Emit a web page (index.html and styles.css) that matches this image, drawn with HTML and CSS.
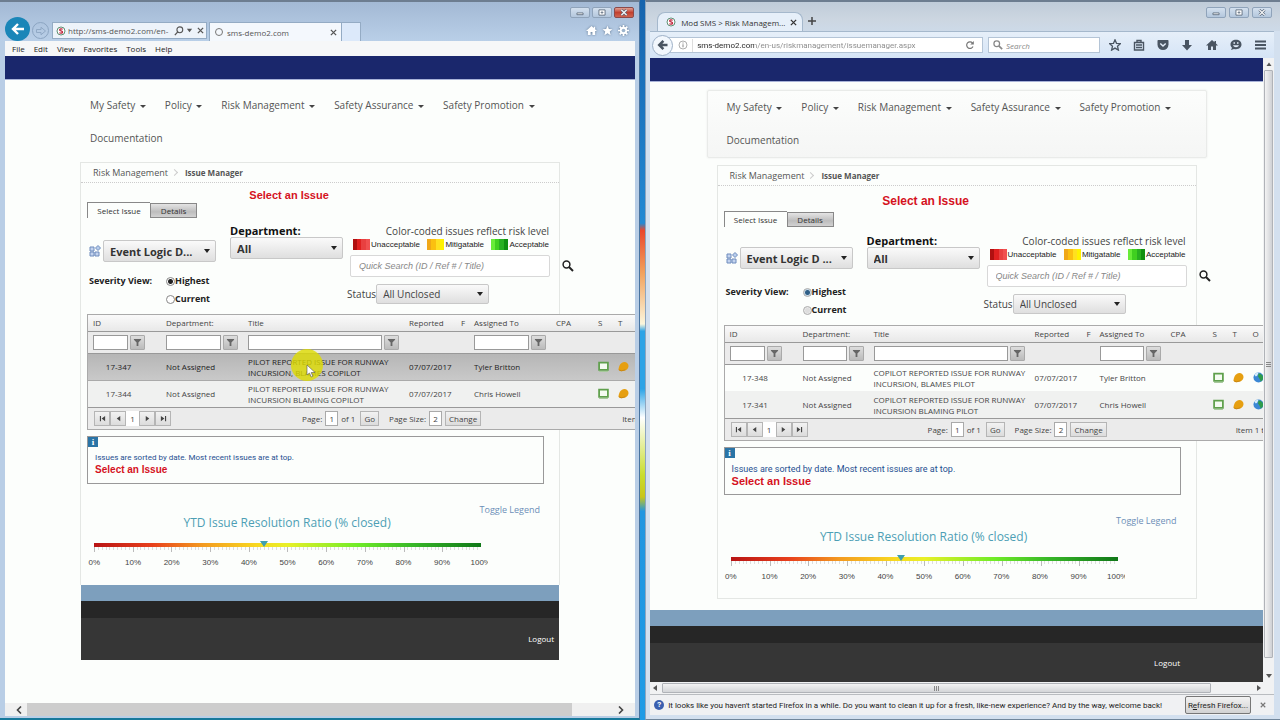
FILE: index.html
```html
<!DOCTYPE html>
<html lang="en">
<head>
    <meta charset="UTF-8">
    <meta name="viewport" content="width=device-width, initial-scale=1.0">
    <title>Risk Management - Issue Manager</title>
    <link rel="stylesheet" href="styles.css">
</head>
<body>
    <!-- Shared icons -->
    <svg class="sprite" aria-hidden="true">
        <symbol id="i-favicon" viewBox="0 0 10 10"><circle cx="5" cy="5" r="4" fill="#fff" stroke="#5f8f74" stroke-width="1"/><path d="M6.6 3.4C5.8 2.6 3.6 2.7 3.7 4c.1 1.200 2.800.8 2.800 2.100C6.400 7.400 4.200 7.400 3.400 6.600" fill="none" stroke="#c0203a" stroke-width="1.300"/></symbol>
        <symbol id="i-back" viewBox="0 0 16 16"><path d="M14 8H3M8 3L3 8l5 5" fill="none" stroke="currentColor" stroke-width="2.400"/></symbol>
        <symbol id="i-back-solid" viewBox="0 0 16 16"><path d="M14 8H4M8.500 2.500L3 8l5.500 5.500" fill="none" stroke="currentColor" stroke-width="3.400"/></symbol>
        <symbol id="i-forward" viewBox="0 0 16 16"><path d="M2 6h6V3l6 5-6 5v-3H2z" fill="none" stroke="currentColor" stroke-width="1.200"/></symbol>
        <symbol id="i-search" viewBox="0 0 12 12"><circle cx="4.500" cy="4.500" r="3.400" fill="none" stroke="currentColor" stroke-width="1.500"/><path d="M7 7l4 4" stroke="currentColor" stroke-width="2"/></symbol>
        <symbol id="i-find" viewBox="0 0 12 12"><circle cx="7" cy="4.500" r="3.500" fill="none" stroke="currentColor" stroke-width="1.300"/><path d="M4.500 7L1 11" stroke="currentColor" stroke-width="1.500"/></symbol>
        <symbol id="i-close" viewBox="0 0 8 8"><path d="M1 1l6 6M7 1L1 7" stroke="currentColor" stroke-width="1.500"/></symbol>
        <symbol id="i-caret" viewBox="0 0 8 8"><path d="M1 2h6L4 6z" fill="currentColor"/></symbol>
        <symbol id="i-home" viewBox="0 0 12 12"><path d="M6 1L0 6.500h2V11h3V7.500h2V11h3V6.500h2L10 4.600V2H8.500v1.300z" fill="currentColor"/></symbol>
        <symbol id="i-star" viewBox="0 0 12 12"><path d="M6 .8l1.500 3.500 3.900.4-2.900 2.500.9 3.900L6 9.100l-3.400 2 .9-3.900L.6 4.700l3.900-.4z"/></symbol>
        <symbol id="i-gear" viewBox="0 0 12 12"><path d="M6 0v12M0 6h12M1.800 1.800l8.400 8.400M10.200 1.800l-8.400 8.400" stroke="currentColor" stroke-width="1.800"/><circle cx="6" cy="6" r="4" fill="currentColor"/><circle cx="6" cy="6" r="2" fill="#9db4cc"/></symbol>
        <symbol id="i-min" viewBox="0 0 10 8"><path d="M1.500 4.500h7v2h-7z" fill="#fff" stroke="#5c6a7c"/></symbol>
        <symbol id="i-max" viewBox="0 0 10 8"><path d="M1.500 1h7v6h-7z" fill="#fff" stroke="#5c6a7c"/><path d="M4 3.500h2v1H4z" fill="#fff" stroke="#5c6a7c"/></symbol>
        <symbol id="i-x" viewBox="0 0 10 8"><path d="M2 1l6 6M8 1L2 7" stroke="#5c6a7c" stroke-width="3"/><path d="M2 1l6 6M8 1L2 7" stroke="#fff" stroke-width="1.500"/></symbol>
        <symbol id="i-funnel" viewBox="0 0 10 10"><path d="M1 1h8v1L6 5v4H4V5L1 2z" fill="#666"/></symbol>
        <symbol id="i-left" viewBox="0 0 8 8"><path d="M6 1v6L2 4z" fill="currentColor"/></symbol>
        <symbol id="i-right" viewBox="0 0 8 8"><path d="M2 1v6l4-3z" fill="currentColor"/></symbol>
        <symbol id="i-chev-left" viewBox="0 0 8 8"><path d="M6 .5L2.500 4 6 7.500" fill="none" stroke="currentColor" stroke-width="1.600"/></symbol>
        <symbol id="i-chev-right" viewBox="0 0 8 8"><path d="M2 .5L5.500 4 2 7.500" fill="none" stroke="currentColor" stroke-width="1.600"/></symbol>
        <symbol id="i-first" viewBox="0 0 8 8"><path d="M1 1h1.300v6H1zM7 1v6L3 4z" fill="currentColor"/></symbol>
        <symbol id="i-last" viewBox="0 0 8 8"><path d="M7 1H5.700v6H7zM1 1v6l4-3z" fill="currentColor"/></symbol>
        <symbol id="i-up" viewBox="0 0 8 8"><path d="M1.500 6h5L4 2.500z" fill="currentColor"/></symbol>
        <symbol id="i-logic" viewBox="0 0 12 12"><path d="M1 2h4v4H1zM1 7h4v4H1zM6 7h4v4H6z" fill="#c3d3ee" stroke="#6f8cbd"/><path d="M9 .500L11.500 3 9 5.500 6.500 3z" fill="#b7cdec" stroke="#6f8cbd"/></symbol>
        <symbol id="i-screen" viewBox="0 0 10 10"><path d="M1 1.500h8v6.500H1z" fill="#f4fbf1" stroke="#5fa04c" stroke-width="1.600"/><path d="M1 9.500h8" stroke="#a7c99c"/></symbol>
        <symbol id="i-helmet" viewBox="0 0 12 12"><path d="M.5 9.500C1 5 3 1.500 7 1.200c2.500 0 4.500 2 4.500 4.300 0 2-1.500 3.500-3 4.700L3 11.300z" fill="#e69f11"/><path d="M1 9.800l3 .9 4-1" fill="none" stroke="#c5830f"/></symbol>
        <symbol id="i-globe" viewBox="0 0 12 12"><circle cx="6" cy="6" r="5.500" fill="#3b87d4"/><path d="M1.500 3C3 1 5 .5 6 1L4.500 4 3 5z" fill="#d8eefc"/><path d="M6 1.500c3 0 5 2 5 4.500 0 2-1 3.500-2.500 4.500L7 7 5.500 5z" fill="#2f9c4c"/></symbol>
    </svg>

    <div class="desktop">
        <!-- Internet Explorer window -->
        <section class="window ie">
            <header class="ie-chrome">
                <div class="window-buttons">
                    <button type="button" aria-label="Minimize"><svg><use href="#i-min"/></svg></button>
                    <button type="button" aria-label="Maximize"><svg><use href="#i-max"/></svg></button>
                    <button type="button" class="close" aria-label="Close"><svg><use href="#i-x"/></svg></button>
                </div>
                <div class="ie-bar">
                    <button type="button" class="ie-back" aria-label="Back"><svg><use href="#i-back"/></svg></button>
                    <button type="button" class="ie-forward" aria-label="Forward"><svg><use href="#i-forward"/></svg></button>
                    <div class="ie-address">
                        <svg><use href="#i-favicon"/></svg>
                        <input type="text" value="http://sms-demo2.com/en-" aria-label="Address">
                        <svg><use href="#i-find"/></svg>
                        <svg class="tiny"><use href="#i-caret"/></svg>
                        <svg class="stop"><use href="#i-close"/></svg>
                    </div>
                    <div class="ie-tab">
                        <span class="spinner"></span>
                        <span class="ie-tab-title">sms-demo2.com</span>
                        <svg class="tiny"><use href="#i-close"/></svg>
                    </div>
                    <button type="button" class="ie-new-tab" aria-label="New tab"></button>
                    <div class="ie-tools">
                        <svg><use href="#i-home"/></svg>
                        <svg fill="currentColor"><use href="#i-star"/></svg>
                        <svg><use href="#i-gear"/></svg>
                    </div>
                </div>
            </header>
            <nav class="ie-menu">
                <button type="button">File</button>
                <button type="button">Edit</button>
                <button type="button">View</button>
                <button type="button">Favorites</button>
                <button type="button">Tools</button>
                <button type="button">Help</button>
            </nav>
            <main class="page">
                <div class="topbar"></div>
                <ul class="nav">
                    <li><a href="#">My Safety <i class="caret"></i></a></li>
                    <li><a href="#">Policy <i class="caret"></i></a></li>
                    <li><a href="#">Risk Management <i class="caret"></i></a></li>
                    <li><a href="#">Safety Assurance <i class="caret"></i></a></li>
                    <li><a href="#">Safety Promotion <i class="caret"></i></a></li>
                    <li><a href="#">Documentation</a></li>
                </ul>
                <div class="content">
                    <div class="breadcrumb"><a href="#">Risk Management</a><i class="chevron"></i><strong>Issue Manager</strong></div>
                    <h1 class="alert">Select an Issue</h1>
                    <div class="tabs">
                        <button type="button" class="tab active">Select Issue</button>
                        <button type="button" class="tab">Details</button>
                    </div>
                    <div class="filters">
                        <div class="filters-main">
                            <div class="filters-row">
                                <svg class="logic"><use href="#i-logic"/></svg>
                                <span class="select"><select aria-label="Event logic"><option>Event Logic D...</option></select></span>
                                <div class="department">
                                    <label for="ie-dept">Department:</label>
                                    <span class="select"><select id="ie-dept"><option>All</option></select></span>
                                </div>
                            </div>
                            <fieldset class="severity">
                                <legend>Severity View:</legend>
                                <div>
                                    <label><input type="radio" name="ie-severity" checked>Highest</label>
                                    <label><input type="radio" name="ie-severity">Current</label>
                                </div>
                            </fieldset>
                        </div>
                        <div class="filters-side">
                            <p class="legend-title">Color-coded issues reflect risk level</p>
                            <div class="legend-items">
                                <span><i class="swatch red"></i>Unacceptable</span>
                                <span><i class="swatch yellow"></i>Mitigatable</span>
                                <span><i class="swatch green"></i>Acceptable</span>
                            </div>
                            <div class="quick-search">
                                <input type="text" placeholder="Quick Search (ID / Ref # / Title)" aria-label="Quick search">
                                <button type="button" aria-label="Search"><svg><use href="#i-search"/></svg></button>
                            </div>
                            <div class="status">
                                <label for="ie-status">Status</label>
                                <span class="select light"><select id="ie-status"><option>All Unclosed</option></select></span>
                            </div>
                        </div>
                    </div>
                    <div class="grid">
                        <table>
                            <colgroup><col class="c-id"><col class="c-dept"><col class="c-title"><col class="c-date"><col class="c-flag"><col class="c-user"><col class="c-cpa"><col class="c-icon"><col class="c-icon"><col class="c-icon"><col></colgroup>
                            <thead>
                                <tr><th>ID</th><th>Department:</th><th>Title</th><th>Reported</th><th>F</th><th>Assigned To</th><th>CPA</th><th>S</th><th>T</th><th>O</th><th></th></tr>
                                <tr class="filter-row">
                                    <td><div class="filter f-id"><input type="text" aria-label="Filter ID"><button type="button" aria-label="Filter"><svg><use href="#i-funnel"/></svg></button></div></td>
                                    <td><div class="filter"><input type="text" aria-label="Filter department"><button type="button" aria-label="Filter"><svg><use href="#i-funnel"/></svg></button></div></td>
                                    <td><div class="filter"><input type="text" aria-label="Filter title"><button type="button" aria-label="Filter"><svg><use href="#i-funnel"/></svg></button></div></td>
                                    <td></td><td></td>
                                    <td><div class="filter"><input type="text" aria-label="Filter assigned to"><button type="button" aria-label="Filter"><svg><use href="#i-funnel"/></svg></button></div></td>
                                    <td></td><td></td><td></td><td></td><td></td>
                                </tr>
                            </thead>
                            <tbody>
                                <tr class="hover">
                                    <td class="id">17-347</td><td>Not Assigned</td>
                                    <td>PILOT REPORTED ISSUE FOR RUNWAY INCURSION, BLAMES COPILOT
                                        <span class="pointer"><svg viewBox="0 0 10 14"><path d="M1 1v10l2.500-2 1.700 4 1.600-.7L5.200 8.500H9z" fill="#fff" stroke="#555" stroke-width=".6"/></svg></span>
                                    </td>
                                    <td>07/07/2017</td><td></td><td>Tyler Britton</td><td></td>
                                    <td class="icon"><svg><use href="#i-screen"/></svg></td><td class="icon"><svg><use href="#i-helmet"/></svg></td><td class="icon"><svg><use href="#i-globe"/></svg></td><td></td>
                                </tr>
                                <tr class="alt">
                                    <td class="id">17-344</td><td>Not Assigned</td>
                                    <td>PILOT REPORTED ISSUE FOR RUNWAY INCURSION BLAMING COPILOT</td>
                                    <td>07/07/2017</td><td></td><td>Chris Howell</td><td></td>
                                    <td class="icon"><svg><use href="#i-screen"/></svg></td><td class="icon"><svg><use href="#i-helmet"/></svg></td><td class="icon"><svg><use href="#i-globe"/></svg></td><td></td>
                                </tr>
                            </tbody>
                        </table>
                        <div class="pager">
                            <div class="pager-buttons">
                                <button type="button" aria-label="First"><svg><use href="#i-first"/></svg></button>
                                <button type="button" aria-label="Previous"><svg><use href="#i-left"/></svg></button>
                                <span class="current">1</span>
                                <button type="button" aria-label="Next"><svg><use href="#i-right"/></svg></button>
                                <button type="button" aria-label="Last"><svg><use href="#i-last"/></svg></button>
                            </div>
                            <div class="pager-group">
                                <label for="ie-page">Page:</label><input id="ie-page" type="text" value="1"><span>of 1</span><button type="button">Go</button>
                            </div>
                            <div class="pager-group">
                                <label for="ie-size">Page Size:</label><input id="ie-size" type="text" value="2"><button type="button">Change</button>
                            </div>
                            <span class="pager-info">Item 1 to 2 of 2</span>
                        </div>
                    </div>
                    <div class="info">
                        <span class="info-icon">i</span>
                        <p>Issues are sorted by date. Most recent issues are at top.</p>
                        <p class="alert">Select an Issue</p>
                    </div>
                    <div class="ratio">
                        <a href="#" class="toggle">Toggle Legend</a>
                        <h2>YTD Issue Resolution Ratio (% closed)</h2>
                        <div class="gauge">
                            <div class="gauge-bar"><i class="gauge-mark" style="left: 44%"></i></div>
                            <div class="gauge-ticks"></div>
                            <div class="gauge-scale"><span>0%</span><span>10%</span><span>20%</span><span>30%</span><span>40%</span><span>50%</span><span>60%</span><span>70%</span><span>80%</span><span>90%</span><span>100%</span></div>
                        </div>
                    </div>
                </div>
                <footer class="footer">
                    <div class="footer-blue"></div>
                    <div class="footer-dark"></div>
                    <div class="footer-main"><a href="#">Logout</a></div>
                </footer>
            </main>
            <div class="ie-scroll">
                <svg><use href="#i-chev-left"/></svg>
                <div class="track"><div class="thumb"></div></div>
                <svg><use href="#i-chev-right"/></svg>
            </div>
        </section>

        <!-- Firefox window -->
        <section class="window firefox">
            <header class="ff-tabs">
                <div class="ff-tab">
                    <svg><use href="#i-favicon"/></svg>
                    <span>Mod SMS &gt; Risk Managem...</span>
                    <svg class="tiny"><use href="#i-close"/></svg>
                </div>
                <button type="button" class="ff-new-tab" aria-label="New tab"><svg viewBox="0 0 8 8"><path d="M4 0v8M0 4h8" stroke="currentColor" stroke-width="1.500"/></svg></button>
                <div class="window-buttons">
                    <button type="button" aria-label="Minimize"><svg><use href="#i-min"/></svg></button>
                    <button type="button" aria-label="Maximize"><svg><use href="#i-max"/></svg></button>
                    <button type="button" aria-label="Close"><svg><use href="#i-x"/></svg></button>
                </div>
            </header>
            <div class="ff-bar">
                <button type="button" class="ff-back" aria-label="Back"><svg><use href="#i-back-solid"/></svg></button>
                <div class="ff-address">
                    <svg viewBox="0 0 10 10"><circle cx="5" cy="5" r="4" fill="none" stroke="#999" stroke-width=".8"/><path d="M5 4.300v3M5 2.500v1" stroke="#888"/></svg>
                    <input type="text" value="sms-demo2.com/en-us/riskmanagement/issuemanager.aspx" aria-label="Address">
                    <svg class="reload" viewBox="0 0 10 10"><path d="M8 6.500A3.300 3.300 0 1 1 7.500 3" fill="none" stroke="#777" stroke-width="1.200"/><path d="M8.800 1v3.500H5.300z" fill="#777"/></svg>
                </div>
                <div class="ff-search">
                    <svg><use href="#i-search"/></svg>
                    <input type="text" placeholder="Search" aria-label="Search">
                </div>
                <div class="ff-tools">
                    <svg fill="none" stroke="currentColor" stroke-width="1.300"><use href="#i-star"/></svg>
                    <svg viewBox="0 0 12 12"><path d="M1.500 3.500h9v7.500h-9zM4 3V1.500h4V3M3 6h6M3 8.500h6" fill="none" stroke="currentColor" stroke-width="1.400"/></svg>
                    <svg viewBox="0 0 12 12"><path d="M1.500 1h9c.6 0 1 .4 1 1v3.500a5.500 5.500 0 0 1-11 0V2c0-.6.4-1 1-1z" fill="currentColor"/><path d="M3.300 4.500L6 7l2.700-2.500" fill="none" stroke="#e3edf9" stroke-width="1.500"/></svg>
                    <svg viewBox="0 0 12 12"><path d="M4 1h4v5h3L6 11.500 1 6h3z" fill="currentColor"/></svg>
                    <svg><use href="#i-home"/></svg>
                    <svg viewBox="0 0 12 12"><path d="M6 .8c3.200 0 5.500 2 5.500 4.700S9.200 10.200 6 10.200c-.8 0-1.300-.1-2-.3L1 11l1-2.300C1 7.800.5 6.700.5 5.500.5 2.800 2.800.8 6 .8z" fill="currentColor"/><path d="M3.500 4h1.500M7 4h1.500" stroke="#e3edf9" stroke-width="1.400"/><path d="M3 6.200c.8 2.600 5.200 2.600 6 0z" fill="#e3edf9"/></svg>
                    <svg viewBox="0 0 12 12"><path d="M1 2.500h11M1 6h11M1 9.500h11" stroke="currentColor" stroke-width="1.800"/></svg>
                </div>
            </div>
            <div class="ff-view">
                <main class="page">
                    <div class="topbar"></div>
                    <ul class="nav">
                        <li><a href="#">My Safety <i class="caret"></i></a></li>
                        <li><a href="#">Policy <i class="caret"></i></a></li>
                        <li><a href="#">Risk Management <i class="caret"></i></a></li>
                        <li><a href="#">Safety Assurance <i class="caret"></i></a></li>
                        <li><a href="#">Safety Promotion <i class="caret"></i></a></li>
                        <li><a href="#">Documentation</a></li>
                    </ul>
                    <div class="content">
                        <div class="breadcrumb"><a href="#">Risk Management</a><i class="chevron"></i><strong>Issue Manager</strong></div>
                        <h1 class="alert">Select an Issue</h1>
                        <div class="tabs">
                            <button type="button" class="tab active">Select Issue</button>
                            <button type="button" class="tab">Details</button>
                        </div>
                        <div class="filters">
                            <div class="filters-main">
                                <div class="filters-row">
                                    <svg class="logic"><use href="#i-logic"/></svg>
                                    <span class="select"><select aria-label="Event logic"><option>Event Logic D ...</option></select></span>
                                    <div class="department">
                                        <label for="ff-dept">Department:</label>
                                        <span class="select"><select id="ff-dept"><option>All</option></select></span>
                                    </div>
                                </div>
                                <fieldset class="severity">
                                    <legend>Severity View:</legend>
                                    <div>
                                        <label><input type="radio" name="ff-severity" checked>Highest</label>
                                        <label><input type="radio" name="ff-severity">Current</label>
                                    </div>
                                </fieldset>
                            </div>
                            <div class="filters-side">
                                <p class="legend-title">Color-coded issues reflect risk level</p>
                                <div class="legend-items">
                                    <span><i class="swatch red"></i>Unacceptable</span>
                                    <span><i class="swatch yellow"></i>Mitigatable</span>
                                    <span><i class="swatch green"></i>Acceptable</span>
                                </div>
                                <div class="quick-search">
                                    <input type="text" placeholder="Quick Search (ID / Ref # / Title)" aria-label="Quick search">
                                    <button type="button" aria-label="Search"><svg><use href="#i-search"/></svg></button>
                                </div>
                                <div class="status">
                                    <label for="ff-status">Status</label>
                                    <span class="select light"><select id="ff-status"><option>All Unclosed</option></select></span>
                                </div>
                            </div>
                        </div>
                        <div class="grid">
                            <table>
                                <colgroup><col class="c-id"><col class="c-dept"><col class="c-title"><col class="c-date"><col class="c-flag"><col class="c-user"><col class="c-cpa"><col class="c-icon"><col class="c-icon"><col class="c-icon"><col></colgroup>
                                <thead>
                                    <tr><th>ID</th><th>Department:</th><th>Title</th><th>Reported</th><th>F</th><th>Assigned To</th><th>CPA</th><th>S</th><th>T</th><th>O</th><th></th></tr>
                                    <tr class="filter-row">
                                        <td><div class="filter f-id"><input type="text" aria-label="Filter ID"><button type="button" aria-label="Filter"><svg><use href="#i-funnel"/></svg></button></div></td>
                                        <td><div class="filter"><input type="text" aria-label="Filter department"><button type="button" aria-label="Filter"><svg><use href="#i-funnel"/></svg></button></div></td>
                                        <td><div class="filter"><input type="text" aria-label="Filter title"><button type="button" aria-label="Filter"><svg><use href="#i-funnel"/></svg></button></div></td>
                                        <td></td><td></td>
                                        <td><div class="filter"><input type="text" aria-label="Filter assigned to"><button type="button" aria-label="Filter"><svg><use href="#i-funnel"/></svg></button></div></td>
                                        <td></td><td></td><td></td><td></td><td></td>
                                    </tr>
                                </thead>
                                <tbody>
                                    <tr>
                                        <td class="id">17-348</td><td>Not Assigned</td>
                                        <td>COPILOT REPORTED ISSUE FOR RUNWAY INCURSION, BLAMES PILOT</td>
                                        <td>07/07/2017</td><td></td><td>Tyler Britton</td><td></td>
                                        <td class="icon"><svg><use href="#i-screen"/></svg></td><td class="icon"><svg><use href="#i-helmet"/></svg></td><td class="icon"><svg><use href="#i-globe"/></svg></td><td></td>
                                    </tr>
                                    <tr class="alt">
                                        <td class="id">17-341</td><td>Not Assigned</td>
                                        <td>COPILOT REPORTED ISSUE FOR RUNWAY INCURSION BLAMING PILOT</td>
                                        <td>07/07/2017</td><td></td><td>Chris Howell</td><td></td>
                                        <td class="icon"><svg><use href="#i-screen"/></svg></td><td class="icon"><svg><use href="#i-helmet"/></svg></td><td class="icon"><svg><use href="#i-globe"/></svg></td><td></td>
                                    </tr>
                                </tbody>
                            </table>
                            <div class="pager">
                                <div class="pager-buttons">
                                    <button type="button" aria-label="First"><svg><use href="#i-first"/></svg></button>
                                    <button type="button" aria-label="Previous"><svg><use href="#i-left"/></svg></button>
                                    <span class="current">1</span>
                                    <button type="button" aria-label="Next"><svg><use href="#i-right"/></svg></button>
                                    <button type="button" aria-label="Last"><svg><use href="#i-last"/></svg></button>
                                </div>
                                <div class="pager-group">
                                    <label for="ff-page">Page:</label><input id="ff-page" type="text" value="1"><span>of 1</span><button type="button">Go</button>
                                </div>
                                <div class="pager-group">
                                    <label for="ff-size">Page Size:</label><input id="ff-size" type="text" value="2"><button type="button">Change</button>
                                </div>
                                <span class="pager-info">Item 1 to 2 of 2</span>
                            </div>
                        </div>
                        <div class="info">
                            <span class="info-icon">i</span>
                            <p>Issues are sorted by date. Most recent issues are at top.</p>
                            <p class="alert">Select an Issue</p>
                        </div>
                        <div class="ratio">
                            <a href="#" class="toggle">Toggle Legend</a>
                            <h2>YTD Issue Resolution Ratio (% closed)</h2>
                            <div class="gauge">
                                <div class="gauge-bar"><i class="gauge-mark" style="left: 44%"></i></div>
                                <div class="gauge-ticks"></div>
                                <div class="gauge-scale"><span>0%</span><span>10%</span><span>20%</span><span>30%</span><span>40%</span><span>50%</span><span>60%</span><span>70%</span><span>80%</span><span>90%</span><span>100%</span></div>
                            </div>
                        </div>
                    </div>
                    <footer class="footer">
                        <div class="footer-blue"></div>
                        <div class="footer-dark"></div>
                        <div class="footer-main"><a href="#">Logout</a></div>
                    </footer>
                </main>
                <div class="ff-vscroll">
                    <svg><use href="#i-up"/></svg>
                    <div class="track"><div class="thumb"><i class="grip"></i></div></div>
                    <svg><use href="#i-caret"/></svg>
                </div>
            </div>
            <div class="ff-hscroll">
                <svg><use href="#i-left"/></svg>
                <div class="track"><div class="thumb"><i class="grip"></i></div></div>
                <svg><use href="#i-right"/></svg>
            </div>
            <div class="ff-notice">
                <span class="help">?</span>
                <p>It looks like you haven't started Firefox in a while. Do you want to clean it up for a fresh, like-new experience? And by the way, welcome back!</p>
                <button type="button" class="refresh">R<u>e</u>fresh Firefox...</button>
                <button type="button" class="dismiss" aria-label="Dismiss"><svg><use href="#i-close"/></svg></button>
            </div>
        </section>
    </div>
</body>
</html>
```
FILE: styles.css
```css
* {
    margin: 0;
    padding: 0;
    box-sizing: border-box;
}

body {
    font-family: "Open Sans", "Noto Sans", sans-serif;
    font-size: 8px;
    color: #444;
    overflow: hidden;
}

button,
input,
select {
    font: inherit;
    color: inherit;
    border: none;
    background: none;
    border-radius: 0;
}

input {
    min-width: 0;
}

a {
    color: inherit;
    text-decoration: none;
}

svg {
    display: block;
    flex: none;
    width: 12px;
    height: 12px;
}

.sprite {
    position: absolute;
    width: 0;
    height: 0;
}

.desktop {
    display: flex;
    gap: 5px;
    height: 100vh;
    background: linear-gradient(#1764ad, #2389d3 31%, #e9482c 32%, #f2a35e 38%, #fbf6dc 45%, #2da3e6 46%, #2da3e6 54%, #fff 58%, #c9dd2e 66%, #c9c51a 69%, #2196e0 71%, #1e9be6);
}

.window {
    flex: 1;
    min-width: 0;
    display: flex;
    flex-direction: column;
    border-top: 2px solid #6d7d90;
}

/* Window buttons */
.window-buttons {
    display: flex;
    justify-content: flex-end;
    gap: 2px;
}

.window-buttons button {
    display: flex;
    align-items: center;
    justify-content: center;
    width: 20px;
    height: 11px;
    border: 1px solid #8fa3ba;
    border-radius: 2px;
    background: linear-gradient(#d3e0ee, #b4c7dd);
}

.window-buttons svg {
    width: 10px;
    height: 7px;
}

.window-buttons .close {
    border-color: #8c4a4a;
    background: linear-gradient(#e0a093, #c2402f 50%, #cf6450);
}

/* Internet Explorer */
.ie {
    flex-grow: 1.01;
    padding: 0 4px 2px 5px;
    background: #b9cee6;
    border-bottom: 2px solid #17799b;
    border-right: 1px solid #48739f;
}

.ie-chrome {
    height: 39px;
    margin: 0 -4px 0 -5px;
    padding: 0 5px;
    background: linear-gradient(#a3b9d4, #b9cfe8);
}

.ie-chrome .window-buttons {
    padding-top: 5px;
}

.ie-bar {
    display: flex;
    align-items: flex-end;
    height: 23px;
}

.ie-back {
    display: flex;
    align-items: center;
    justify-content: center;
    width: 25px;
    height: 24px;
    border-radius: 50%;
    background: #1a86b8;
    color: #fff;
}

.ie-back svg {
    width: 16px;
    height: 16px;
}

.ie-forward {
    display: flex;
    align-items: center;
    justify-content: center;
    width: 17px;
    height: 17px;
    margin: 0 2px 2px;
    border: 1px solid #8ca5c2;
    border-radius: 50%;
    color: #8ca5c2;
}

.ie-address {
    display: flex;
    align-items: center;
    gap: 2px;
    width: 155px;
    height: 17px;
    margin: 0 2px 2px 1px;
    padding: 0 2px 0 3px;
    border: 1px solid #94abc4;
    background: #edf3fa;
    color: #555;
}

.ie-address svg {
    width: 10px;
    height: 10px;
}

.tiny,
.ie-address .tiny,
.ie-address .stop,
.ff-tab .tiny {
    width: 7px;
    height: 7px;
}

.ie-address .stop {
    margin-left: 2px;
}

.ie-address input {
    flex: 1;
}

.ie-tab {
    display: flex;
    align-items: center;
    gap: 4px;
    width: 133px;
    height: 19px;
    padding: 0 4px 0 5px;
    border: 1px solid #94abc4;
    border-bottom: none;
    background: #f4f8fd;
    color: #555;
}

.ie-tab-title {
    flex: 1;
}

.spinner {
    width: 8px;
    height: 8px;
    border: 1px solid #777;
    border-radius: 50%;
}

.ie-new-tab {
    width: 19px;
    height: 19px;
    border: 1px solid #94abc4;
    border-left: none;
    border-bottom: none;
    background: #dce9fa;
}

.ie-tools {
    display: flex;
    gap: 5px;
    margin-left: auto;
    padding: 0 5px 5px 0;
    color: #fff;
    filter: drop-shadow(0 0 1px #5d7590);
}

.ie-tools svg {
    width: 11px;
    height: 11px;
}

.ie-menu {
    display: flex;
    align-items: center;
    gap: 9px;
    height: 15px;
    padding-left: 7px;
    background: #f6f7f8;
    color: #222;
}

.ie-scroll {
    display: flex;
    align-items: center;
    gap: 4px;
    height: 13px;
    padding: 0 10px;
    background: #f0f0f0;
    color: #444;
}

.ie-scroll svg,
.ff-vscroll svg,
.ff-hscroll svg {
    width: 8px;
    height: 8px;
}

.track {
    flex: 1;
}

.ie-scroll .track,
.ie-scroll .thumb {
    height: 100%;
}

.ie-scroll .thumb {
    width: 93%;
    background: #cdcdcd;
}

/* Firefox */
.firefox {
    padding: 0 6px 4px 4px;
    background: #d3e0ef;
    border-left: 1px solid #8ea6bf;
    border-bottom: 1px solid #71869b;
}

.ff-tabs {
    display: flex;
    align-items: flex-end;
    height: 29px;
    margin: 0 -6px 0 -4px;
    padding: 0 8px 0 11px;
    background: linear-gradient(#c0ccd9, #ccd6e1 60%, #cddae8);
}

.ff-tab {
    display: flex;
    align-items: center;
    gap: 5px;
    width: 146px;
    height: 19px;
    padding: 0 8px;
    border: 1px solid #a5b8cc;
    border-bottom: none;
    border-radius: 8px 8px 0 0;
    background: #e6eff9;
    color: #333;
}

.ff-tab span {
    flex: 1;
    white-space: nowrap;
}

.ff-tab svg {
    width: 10px;
    height: 10px;
}

.ff-new-tab {
    padding: 6px 5px;
    color: #444;
}

.ff-new-tab svg {
    width: 8px;
    height: 8px;
}

.firefox .window-buttons {
    gap: 3px;
    align-self: flex-start;
    margin-left: auto;
    padding-top: 5px;
}

.ff-bar {
    display: flex;
    align-items: center;
    gap: 5px;
    height: 27px;
    padding: 0 8px 0 2px;
    border-top: 1px solid #a5b8cc;
    background: linear-gradient(#e6eff9, #d5e4f6);
    color: #4a5562;
}

.ff-back {
    display: flex;
    align-items: center;
    justify-content: center;
    z-index: 1;
    width: 21px;
    height: 21px;
    margin-right: -14px;
    border: 1px solid #9db0c6;
    border-radius: 50%;
    background: #f2f7fd;
}

.ff-address,
.ff-search {
    display: flex;
    align-items: center;
    height: 16px;
    border: 1px solid #b4c4d6;
    background: #fff;
}

.ff-address {
    flex: 1;
    gap: 4px;
    padding: 0 7px 0 13px;
}

.ff-address svg {
    width: 10px;
    height: 10px;
}

/* Host in dark, path in grey */
.ff-address input {
    flex: 1;
    height: 13px;
    padding-left: 4px;
    border-left: 1px solid #ddd;
    background: linear-gradient(90deg, #222 61px, #888 61px);
    background-clip: text;
    font-family: Roboto, sans-serif;
    -webkit-text-fill-color: transparent;
}

.reload {
    margin-left: 6px;
}

.ff-search {
    gap: 3px;
    width: 112px;
    padding: 0 4px;
    color: #888;
}

.ff-search svg {
    width: 10px;
    height: 10px;
}

.ff-search input {
    width: 100%;
}

.ff-search input::placeholder {
    color: #888;
    font-style: italic;
}

.ff-tools {
    display: flex;
    justify-content: space-between;
    width: 161px;
    padding-left: 4px;
}

.ff-view {
    flex: 1;
    display: flex;
    min-height: 0;
}

.grip {
    width: 5px;
    height: 5px;
    background: repeating-linear-gradient(90deg, #888 0 1px, transparent 1px 2px);
}

.ff-vscroll .grip {
    background: repeating-linear-gradient(#888 0 1px, transparent 1px 2px);
}

.ff-vscroll,
.ff-hscroll {
    display: flex;
    align-items: center;
    background: #f1f2f3;
    color: #555;
}

.ff-vscroll .thumb,
.ff-hscroll .thumb {
    display: flex;
    align-items: center;
    justify-content: center;
    border: 1px solid #b0b3b8;
    border-radius: 1px;
}

.ff-vscroll {
    flex-direction: column;
    gap: 2px;
    width: 11px;
    padding: 2px 0;
}

.ff-vscroll .thumb {
    width: 9px;
    height: 98%;
    background: linear-gradient(90deg, #f3f3f3, #cfd1d5);
}

.ff-hscroll {
    gap: 3px;
    height: 12px;
    padding: 0 11px 0 1px;
}

.ff-hscroll .thumb {
    width: 93%;
    height: 10px;
    background: linear-gradient(#f3f3f3, #d3d5d8);
}

.ff-notice {
    display: flex;
    align-items: center;
    gap: 4px;
    height: 21px;
    padding: 0 8px 0 4px;
    border-top: 1px solid #b9bcc0;
    background: #f0f1f3;
    color: #222;
    font-family: Roboto, sans-serif;
    white-space: nowrap;
}

.ff-notice p {
    flex: 1;
}

.help {
    width: 10px;
    height: 10px;
    border-radius: 50%;
    background: #3a5fb0;
    color: #fff;
    font-weight: bold;
    line-height: 10px;
    text-align: center;
}

.refresh {
    width: 66px;
    height: 18px;
    border: 1px solid #777;
    border-radius: 2px;
    background: linear-gradient(#f2f2f2, #d2d2d2);
}

.dismiss {
    margin-left: 5px;
    color: #777;
}

.dismiss svg {
    width: 6px;
    height: 6px;
}

/* Page */
.page {
    flex: 1;
    min-width: 0;
    min-height: 0;
    overflow: hidden;
    background: #fcfefc;
}

.topbar {
    height: 24px;
    border-bottom: 1px solid #a9b3d8;
    background: #1a276c;
}

.nav {
    display: flex;
    flex-wrap: wrap;
    column-gap: 19px;
    max-width: 500px;
    margin: 8px auto 7px;
    padding: 0 19px;
    border: 1px solid transparent;
    list-style: none;
    font-size: 10px;
    line-height: 33px;
    color: #555;
}

.ie .nav {
    margin-bottom: 6px;
}

.firefox .nav {
    border-color: #e9ebe9;
    border-radius: 2px;
    background: linear-gradient(#fcfdfc, #f5f6f5);
    box-shadow: 0 0 2px #e6e6e6;
}

.caret {
    display: inline-block;
    margin-left: 2px;
    border: 3px solid transparent;
    border-top-color: #444;
    border-bottom: none;
    vertical-align: middle;
}

.content {
    max-width: 480px;
    margin: 0 auto;
    padding: 0 6px;
    border: 1px solid #e4e7e4;
}

.ie .content {
    border-bottom: none;
}

.breadcrumb {
    display: flex;
    align-items: center;
    height: 20px;
    margin: 0 -6px;
    padding-left: 12px;
    border-bottom: 1px dotted #ccc;
    color: #555;
    font-size: 9px;
}

.breadcrumb strong {
    font-size: 8px;
}

.chevron {
    width: 5px;
    height: 5px;
    margin: 0 8px 0 4px;
    border: 1px solid #ccc;
    border-left: none;
    border-bottom: none;
    transform: rotate(45deg);
}

.alert {
    color: #d5121e;
    font-family: "Liberation Sans", Arial, sans-serif;
    font-weight: bold;
    font-size: 11px;
}

h1.alert {
    padding: 5px 62px 0 0;
    line-height: 14px;
    text-align: center;
}

.firefox h1.alert {
    padding: 8px 62px 3px 0;
    font-size: 12px;
}

.tabs {
    display: flex;
    align-items: flex-end;
}

.tab {
    width: 47px;
    height: 15px;
    border: 1px solid #888;
    background: linear-gradient(#e4e4e4, #bdbdbd 60%, #d2d2d2);
    color: #333;
}

.tab.active {
    width: 63px;
    height: 16px;
    border-right: none;
    border-bottom: none;
    background: #fcfefc;
}

.filters {
    display: flex;
    gap: 7px;
    padding: 6px 0 6px 2px;
}

.firefox .filters {
    padding-top: 7px;
}

.filters-main {
    width: 254px;
}

.filters-row {
    display: flex;
    align-items: flex-end;
}

.logic {
    margin: 0 2px 5px 0;
}

.department {
    display: flex;
    flex-direction: column;
    margin-left: 14px;
    color: #111;
    font-size: 11px;
    font-weight: bold;
    line-height: 13px;
}

.ie .department {
    margin-bottom: 3px;
}

.select {
    position: relative;
    display: block;
    width: 113px;
}

.select select {
    appearance: none;
    width: 100%;
    height: 22px;
    padding-left: 6px;
    border: 1px solid #c8c8c8;
    border-radius: 2px;
    background: linear-gradient(#fafafa, #dfdfdf);
    color: #333;
    font-size: 11px;
    font-weight: bold;
}

.select::after {
    content: "";
    position: absolute;
    top: 9px;
    right: 6px;
    border: 3px solid transparent;
    border-top: 4px solid #222;
    border-bottom: none;
    pointer-events: none;
}

.select.light select {
    height: 20px;
    color: #444;
    font-size: 10px;
    font-weight: normal;
}

.select.light::after {
    top: 8px;
}

.severity {
    display: flex;
    margin-top: 10px;
    border: none;
    color: #222;
    font-size: 9px;
    font-weight: bold;
    line-height: 18px;
}

.firefox .severity {
    margin-top: 14px;
}

.severity legend {
    float: left;
    width: 77px;
}

.severity label {
    display: flex;
    align-items: center;
    height: 18px;
}

.severity input {
    appearance: none;
    width: 9px;
    height: 9px;
    border: 1px solid #888;
    border-radius: 50%;
    background: #fff;
}

.severity input:checked {
    background: radial-gradient(#222 2px, #fff 3px);
}

.firefox .severity input {
    border-color: #aaa;
    background: radial-gradient(#ddd 2px, #f4f4f4 4px);
}

.firefox .severity input:checked {
    background: radial-gradient(#2f5f86 2px, #c9dbe8 3px);
}

.filters-side {
    flex: 1;
    min-width: 0;
}

.legend-title {
    margin-top: 1px;
    padding-right: 4px;
    font-size: 10px;
    line-height: 13px;
    text-align: right;
    white-space: nowrap;
}

.legend-items {
    display: flex;
    justify-content: space-between;
    width: 196px;
    margin-left: 3px;
    font-family: "Liberation Sans", Arial, sans-serif;
    line-height: 13px;
    color: #222;
}

.legend-items span {
    display: flex;
    align-items: center;
}

.swatch {
    width: 17px;
    height: 11px;
    margin-right: 1px;
}

.swatch.red {
    background: linear-gradient(90deg, #b01010 25%, #e02020 25% 50%, #e84040 50% 75%, #f05050 75%);
}

.swatch.yellow {
    background: linear-gradient(90deg, #f0a818 25%, #fbc010 25% 50%, #ffe020 50% 75%, #fff200 75%);
}

.swatch.green {
    background: linear-gradient(90deg, #68ec38 25%, #40d020 25% 50%, #28b020 50% 75%, #109010 75%);
}

.quick-search {
    display: flex;
    align-items: center;
    margin: 4px 0 7px;
}

.quick-search input {
    flex: none;
    width: 200px;
    height: 22px;
    padding-left: 8px;
    border: 1px solid #d8d8d8;
    border-radius: 2px;
    background: #fff;
    font-family: "Liberation Sans", Arial, sans-serif;
    font-size: 9px;
}

.quick-search input::placeholder {
    color: #888;
    font-style: italic;
}

.quick-search button {
    flex: none;
    margin-left: 12px;
    color: #222;
}

.status {
    display: flex;
    align-items: center;
    margin-left: -3px;
    font-size: 10px;
}

/* Issue grid */
.grid {
    width: 660px;
    border: 1px solid #aaa;
    background: #fcfefc;
}

.grid table {
    width: 100%;
    table-layout: fixed;
    border-collapse: collapse;
}

.c-id { width: 73px; }
.c-dept { width: 82px; }
.c-title { width: 161px; }
.c-date { width: 52px; }
.c-flag { width: 13px; }
.c-user { width: 82px; }
.c-cpa { width: 42px; }
.c-icon { width: 20px; }

.firefox .c-dept { width: 71px; }
.firefox .c-user { width: 71px; }

.grid th,
.grid td {
    padding: 0 0 0 5px;
    text-align: left;
    font-weight: normal;
    line-height: 11px;
}

.grid th {
    height: 16px;
    border-bottom: 1px solid #999;
    background: linear-gradient(#fafafa, #e8e8e8);
}

.filter-row td {
    height: 22px;
    border-bottom: 1px solid #999;
    background: #ebebeb;
}

.grid tbody td {
    height: 27px;
}

.grid tbody .id {
    padding-right: 17px;
    text-align: center;
}

.grid .icon svg {
    width: 11px;
    height: 11px;
}

.alt {
    background: #f0f1f0;
}

.hover {
    background: linear-gradient(#b5b5b5, #c9c9c9);
    color: #222;
}

.hover td {
    border-bottom: 1px solid #aaa;
}

.grid .hover td:nth-child(3) {
    position: relative;
}

.pointer {
    position: absolute;
    top: -5px;
    left: 48px;
    width: 32px;
    height: 32px;
    padding: 15px 0 0 15px;
    border-radius: 50%;
    background: rgba(222, 220, 0, 0.8);
}

.grid .pointer svg {
    width: 10px;
    height: 14px;
}

.filter {
    display: flex;
    gap: 2px;
    padding-right: 5px;
}

.f-id {
    padding-right: 16px;
}

.filter input {
    flex: 1;
    height: 15px;
    border: 1px solid #999;
    background: #fff;
}

.filter button {
    display: flex;
    align-items: center;
    justify-content: center;
    flex: none;
    width: 15px;
    height: 15px;
    border: 1px solid #aaa;
    border-radius: 1px;
    background: linear-gradient(#ddd, #bbb);
}

.grid .filter svg {
    width: 9px;
    height: 9px;
}

.pager {
    display: flex;
    align-items: center;
    height: 22px;
    padding-left: 6px;
    border-top: 1px solid #999;
    background: #ebebeb;
}

.pager-buttons {
    display: flex;
    align-items: center;
    margin-right: 131px;
}

.firefox .pager-buttons {
    margin-right: 120px;
}

.pager button {
    height: 15px;
    border: 1px solid #b5b5b5;
    background: linear-gradient(#f2f2f2, #dcdcdc);
}

.pager-buttons button {
    display: flex;
    align-items: center;
    justify-content: center;
    width: 16px;
}

.pager-buttons svg {
    width: 7px;
    height: 7px;
}

.current {
    width: 13px;
    background: #fff;
    line-height: 15px;
    text-align: center;
}

.pager-group {
    display: flex;
    align-items: center;
    gap: 3px;
    margin-right: 10px;
}

.pager-group input {
    width: 13px;
    height: 15px;
    border: 1px solid #aaa;
    background: #fff;
    text-align: center;
}

.pager-group button {
    padding: 0 3px;
}

.pager-group span + button {
    margin-left: 2px;
}

.pager-info {
    margin-left: 131px;
}

.firefox .pager-info {
    margin-left: 119px;
}

/* Info panel */
.info {
    width: 457px;
    margin-top: 6px;
    padding-bottom: 7px;
    border: 1px solid #999;
    color: #1f4f91;
}

.info-icon {
    display: block;
    width: 10px;
    height: 10px;
    background: #2a74a6;
    color: #fff;
    font: bold 9px/10px "Liberation Serif", serif;
    text-align: center;
}

.info p {
    padding: 5px 7px 0;
    line-height: 12px;
    font-family: Roboto, sans-serif;
}

.firefox .info p {
    font-size: 9px;
}

.info .alert {
    padding-top: 0;
    font-family: "Liberation Sans", Arial, sans-serif;
    font-size: 10px;
}

.firefox .info .alert {
    font-size: 11px;
}

/* Resolution ratio */
.ratio {
    padding-top: 19px;
    text-align: center;
}

.toggle {
    display: block;
    padding-right: 13px;
    color: #6c8fb8;
    font-size: 9px;
    line-height: 13px;
    text-align: right;
}

.ratio h2 {
    padding-right: 66px;
    color: #4d9fb5;
    font-size: 12px;
    font-weight: normal;
    line-height: 14px;
}

.firefox .ratio h2 {
    padding-top: 3px;
}

.gauge {
    width: 401px;
    padding: 13px 7px 16px;
    overflow: hidden;
}

.firefox .gauge {
    padding-bottom: 15px;
}

.gauge-bar {
    position: relative;
    height: 4px;
    background: linear-gradient(90deg, #b81414, #e8401c 15%, #f39a20 28%, #f8d820 42%, #e8f028 50%, #70ec28 68%, #38b828 82%, #107818);
}

.gauge-mark {
    position: absolute;
    top: -2px;
    margin-left: -4px;
    border: 4px solid transparent;
    border-top: 6px solid #3f9fae;
    border-bottom: none;
}

.gauge-ticks {
    height: 5px;
    background:
        repeating-linear-gradient(90deg, #bbb 0 1px, transparent 1px 10%),
        repeating-linear-gradient(90deg, #ddd 0 1px, transparent 1px 1%) 0 0 / 100% 3px no-repeat;
}

.gauge-scale {
    display: grid;
    grid-template-columns: repeat(11, 1fr);
    margin: 5px -19px 0;
    font-family: "Liberation Sans", Arial, sans-serif;
    line-height: 12px;
}

/* Footer */
.footer {
    color: #fff;
}

.ie .footer {
    max-width: 478px;
    margin: 0 auto;
}

.firefox .footer {
    margin-top: 11px;
}

.footer-blue {
    height: 16px;
    background: #7d9fbd;
}

.footer-dark {
    height: 17px;
    background: #262626;
}

.footer-main {
    padding: 15px 5px;
    background: #363636;
    line-height: 12px;
    text-align: right;
}

.firefox .footer-main {
    padding: 14px 83px 14px 0;
}
```
